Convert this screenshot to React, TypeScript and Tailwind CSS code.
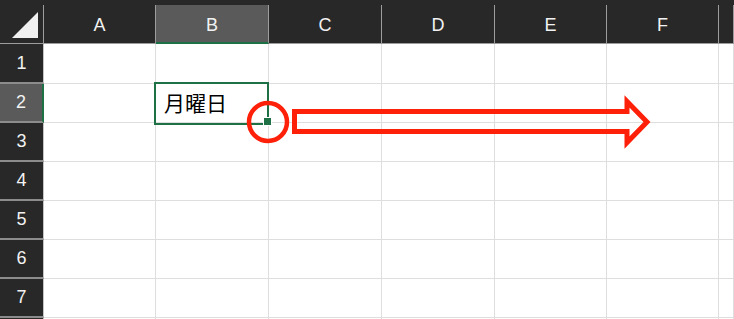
const cols = ["A", "B", "C", "D", "E", "F", ""];
const rows = [1, 2, 3, 4, 5, 6, 7, 8];
const rowHeights = ["h-[40px]", "h-[39px]", "h-[39px]", "h-[39px]", "h-[39px]", "h-[39px]", "h-[39px]", "h-[20px]"];
const gridCols = "grid grid-cols-[44px_112px_113px_113px_113px_112px_112px_1fr]";

export default function App() {
  return (
    <div className="relative w-[734px] h-[319px] overflow-hidden bg-white font-['Liberation_Sans',Arial,sans-serif]">
      <div className="h-[5px] bg-[#282828]" />

      {/* column headers */}
      <div className={`${gridCols} h-[39px] bg-[#282828]`}>
        <div className="relative border-r border-b border-[#9c9c9c]">
          <svg className="absolute left-0 top-[-5px]" width="44" height="44">
            <polygon points="12,38 38,38 38,12" fill="#f0f0f0" />
          </svg>
        </div>
        {cols.map((c) => (
          <div
            key={c || "g"}
            className={
              c === "B"
                ? "flex items-center justify-center pt-[3px] bg-[#5a5a5a] border-r border-[#9c9c9c] border-b-2 border-b-[#1e7145] text-[18px] text-[#f2f2f2]"
                : "flex items-center justify-center pt-[3px] border-r border-b border-[#9c9c9c] text-[18px] text-[#f2f2f2]"
            }
          >
            {c}
          </div>
        ))}
      </div>

      {/* body rows */}
      {rows.map((r, i) => (
        <div key={r} className={`${gridCols} ${rowHeights[i]}`}>
          <div
            className={
              r === 2
                ? "flex items-center justify-center bg-[#5a5a5a] border-b-2 border-[#8c8c8c] border-r-2 border-r-[#1e7145] text-[18px] text-[#f2f2f2]"
                : "flex items-center justify-center bg-[#282828] border-b-2 border-[#8c8c8c] border-r border-r-[#c4c4c4] text-[18px] text-[#f2f2f2]"
            }
          >
            {r < 8 ? r : null}
          </div>
          {cols.map((c) => (
            <div
              key={c || "g"}
              className="flex items-center border-r border-b border-[#dedede] pl-[8px] text-[21px] text-black font-['Noto_Sans_CJK_JP',sans-serif]"
            >
              {r === 2 && c === "B" ? "月曜日" : null}
            </div>
          ))}
        </div>
      ))}

      {/* selection + fill handle */}
      <div className="absolute left-[154px] top-[82px] w-[115px] h-[43px] border-2 border-[#1e7145]" />
      <div className="absolute left-[263px] top-[117px] w-[9px] h-[9px] bg-[#1e7145] border border-white" />

      {/* annotation */}
      <svg className="absolute left-0 top-0" width="734" height="319">
        <circle cx="268" cy="122" r="19" fill="none" stroke="#ff200a" strokeWidth="4.5" />
        <path
          d="M294.5 111.5 H627 V101.5 L647 122 L627 142.5 V131.5 H294.5 Z"
          fill="none"
          stroke="#ff200a"
          strokeWidth="5"
          strokeLinejoin="miter"
        />
      </svg>
    </div>
  );
}
